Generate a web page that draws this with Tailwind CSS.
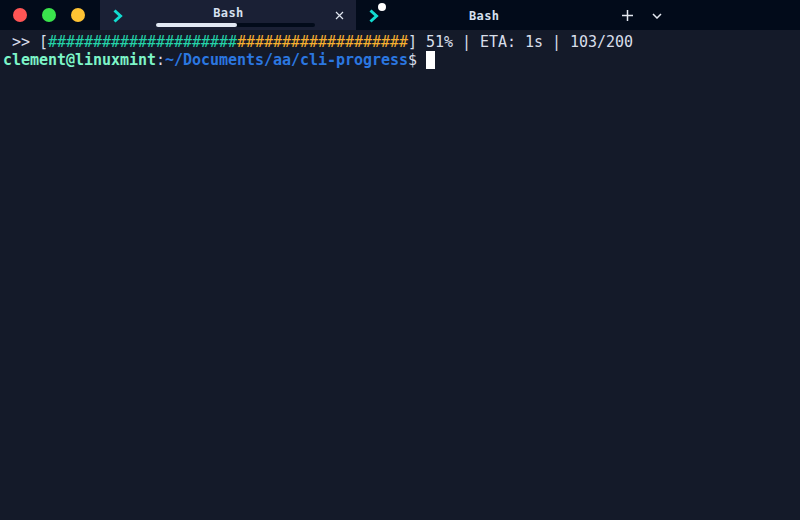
<!DOCTYPE html>
<html lang="en">
  <head>
    <meta charset="UTF-8" />
    <title>Bash</title>
    <script src="https://cdn.jsdelivr.net/npm/@tailwindcss/browser@4"></script>
  </head>
  <body class="w-[800px] h-[520px] overflow-hidden bg-[#141a29] font-['DejaVu_Sans_Mono',monospace]">
    <!-- Title bar -->
    <div class="flex h-[30px] bg-[#020b1a]">
      <div class="flex w-[100px] items-center gap-[15px] pl-[13px]">
        <span class="size-[14px] rounded-full bg-[#ff5555]"></span>
        <span class="size-[14px] rounded-full bg-[#3ae44c]"></span>
        <span class="size-[14px] rounded-full bg-[#ffc333]"></span>
      </div>

      <!-- Active tab -->
      <div class="relative flex w-[256px] bg-[#1a2035]">
        <svg class="ml-[12px] mt-[9px] h-[14px] w-[12px]" viewBox="0 0 12 14" fill="none">
          <path d="M2.5 1.5 L8.5 7 L2.5 12.5" stroke="#12dcd0" stroke-width="3" />
        </svg>
        <div class="relative ml-[32px] flex w-[159px] flex-col items-center">
          <span class="mt-[5px] -ml-[14px] text-[12px] leading-[16px] font-bold tracking-[0.4px] text-[#d6e0f0]">Bash</span>
          <div class="mt-[2px] h-[4px] w-full rounded-full bg-[#020b1a]">
            <div class="h-full w-[81px] rounded-full bg-[#e2e9f5]"></div>
          </div>
        </div>
        <svg class="ml-[20px] mt-[11px] size-[9px]" viewBox="0 0 9 9" fill="none">
          <path d="M1 1 L8 8 M8 1 L1 8" stroke="#dfe5ef" stroke-width="1.2" />
        </svg>
      </div>

      <!-- Inactive tab -->
      <div class="relative flex w-[256px]">
        <svg class="ml-[12px] mt-[9px] h-[14px] w-[12px]" viewBox="0 0 12 14" fill="none">
          <path d="M2.5 1.5 L8.5 7 L2.5 12.5" stroke="#12dcd0" stroke-width="3" />
        </svg>
        <span class="absolute left-[22px] top-[3px] size-[8px] rounded-full bg-white"></span>
        <span class="ml-[89px] mt-[8px] text-[12px] leading-[16px] font-bold tracking-[0.4px] text-[#d6e0f0]">Bash</span>
      </div>

      <!-- Tab actions -->
      <svg class="ml-[10px] mt-[10px] size-[11px]" viewBox="0 0 11 11" fill="none">
        <path d="M5.5 0 V11 M0 5.5 H11" stroke="#e4e8f0" stroke-width="1.5" />
      </svg>
      <svg class="ml-[19px] mt-[13px] h-[6px] w-[10px]" viewBox="0 0 10 6" fill="none">
        <path d="M1 1 L5 5 L9 1" stroke="#e4e8f0" stroke-width="1.5" />
      </svg>
    </div>

    <!-- Terminal output -->
    <div class="pl-[3px] pt-[3px] text-[15px] leading-[18px] tracking-[-0.03px] text-[#d8dee9]">
      <div class="whitespace-pre"> &gt;&gt; [<span class="text-[#24d4aa]">#####################</span><span class="text-[#f8b030]">###################</span>] 51% | ETA: 1s | 103/200</div>
      <div class="flex items-center whitespace-pre"><span class="font-bold text-[#7df5c8]">clement@linuxmint</span><span>:</span><span class="font-bold text-[#2b77e0]">~/Documents/aa/cli-progress</span><span>$ </span><span class="h-[18px] w-[9px] bg-white"></span></div>
    </div>
  </body>
</html>
